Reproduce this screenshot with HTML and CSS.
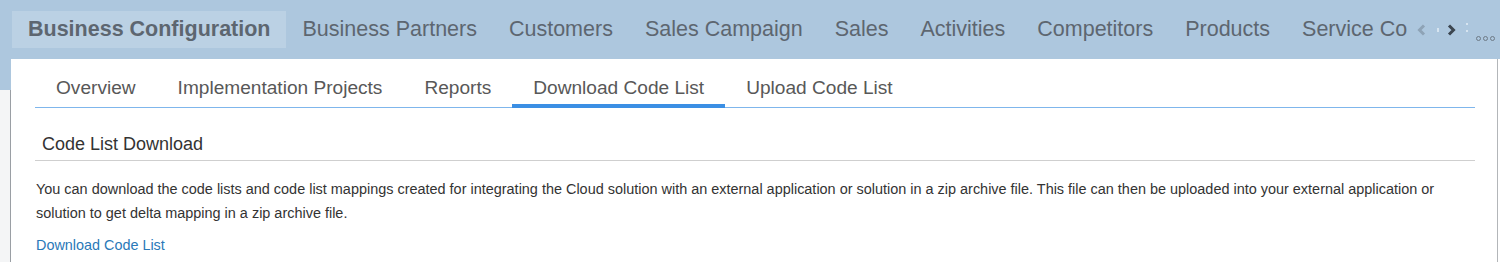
FILE: index.html
```html
<!DOCTYPE html>
<html lang="en">
<head>
    <meta charset="UTF-8">
    <title>Business Configuration</title>
    <link rel="stylesheet" href="styles.css">
</head>
<body>
    <!-- Top work center bar -->
    <div class="topbar">
        <nav class="workcenters">
            <a class="wc active">Business Configuration</a>
            <a class="wc">Business Partners</a>
            <a class="wc">Customers</a>
            <a class="wc">Sales Campaign</a>
            <a class="wc">Sales</a>
            <a class="wc">Activities</a>
            <a class="wc">Competitors</a>
            <a class="wc">Products</a>
            <a class="wc cut">Service Co</a>
        </nav>
        <div class="scrollers">
            <svg class="arrow off" width="9" height="12" viewBox="0 0 9 12"><path d="M7 1.5 L2.5 6 L7 10.5" fill="none" stroke="currentColor" stroke-width="3"/></svg>
            <span class="dot-sep single"></span>
            <svg class="arrow" width="9" height="12" viewBox="0 0 9 12"><path d="M2 1.5 L6.5 6 L2 10.5" fill="none" stroke="currentColor" stroke-width="3"/></svg>
            <span class="dot-sep"></span>
            <span class="overflow"><i></i><i></i><i></i></span>
        </div>
    </div>

    <div class="page">
        <div class="side-left"></div>
        <main class="panel">
            <ul class="tabs">
                <li class="tab">Overview</li>
                <li class="tab">Implementation Projects</li>
                <li class="tab">Reports</li>
                <li class="tab selected">Download Code List</li>
                <li class="tab">Upload Code List</li>
            </ul>

            <h2 class="section-title">Code List Download</h2>
            <p class="section-text">You can download the code lists and code list mappings created for integrating the Cloud solution with an external application or solution in a zip archive file. This file can then be uploaded into your external application or solution to get delta mapping in a zip archive file.</p>
            <a class="download-link" href="#">Download Code List</a>
        </main>
        <div class="side-right"></div>
    </div>
</body>
</html>
```

FILE: styles.css
```css
body {
    margin: 0;
    font-family: 'Liberation Sans', Arial, sans-serif;
    background-color: #adc7de;
    overflow: hidden;
}
/* Work center bar */
.topbar {
    display: flex;
    align-items: center;
    height: 59px;
    padding-left: 12px;
}
.workcenters {
    display: flex;
    width: 1397px;
    overflow: hidden;
    white-space: nowrap;
}
.wc {
    flex: none;
    height: 37px;
    line-height: 37px;
    padding: 0 16px;
    font-size: 21.5px;
    color: #5d6670;
}
.wc.active {
    font-weight: bold;
    background-color: #bbd1e4;
}
.wc.cut {
    padding-right: 0;
}
.scrollers {
    display: flex;
    align-items: center;
    margin-left: 8px;
    height: 37px;
}
.arrow {
    color: #3c4650;
    margin-top: 1px;
}
.arrow.off {
    color: #8ea3b6;
}
.dot-sep {
    width: 2px;
    height: 4px;
    margin: 0 10px;
    background-color: #d6e4f0;
}
.dot-sep.single {
    margin: 0 8px 0 11px;
}
.dot-sep:not(.single) {
    height: 9px;
    background: none;
    border-top: 2px solid #d6e4f0;
    border-bottom: 2px solid #d6e4f0;
    box-sizing: border-box;
    margin: -4px 8px 0 10px;
}
.overflow {
    display: flex;
    gap: 2px;
    margin-top: 18px;
}
.overflow i {
    width: 3px;
    height: 3px;
    border: 1px solid #6d7a86;
    border-radius: 50%;
}
/* Page body */
.page {
    display: flex;
    height: 203px;
}
.side-left {
    width: 10px;
    margin-top: 31px;
    background-color: #f4f5f6;
    border-right: 1px solid #9a9fa4;
}
.side-right {
    width: 2px;
    background-color: #fff;
    border-left: 1px solid #b3b6b9;
}
.panel {
    flex: 1;
    background-color: #fff;
    padding: 0 22px 0 24px;
    color: #333;
}
.tabs {
    display: flex;
    list-style: none;
    margin: 0;
    padding: 0;
    height: 48px;
    border-bottom: 1px solid #7fb6ec;
}
.tab {
    padding: 0 21px;
    font-size: 19.1px;
    line-height: 58px;
    color: #585858;
}
.tab.selected {
    height: 45px;
    border-bottom: 4px solid #3b8fe4;
    overflow: hidden;
}
.section-title {
    margin: 25px 0 0;
    padding: 0 0 5px 7px;
    font-size: 18px;
    font-weight: normal;
    line-height: 22px;
    color: #333;
    border-bottom: 1px solid #cfcfcf;
}
.section-text {
    margin: 16px 0 0 1px;
    font-size: 14.45px;
    line-height: 24px;
    color: #333;
}
.download-link {
    display: inline-block;
    margin: 8px 0 0 1px;
    font-size: 14.4px;
    line-height: 24px;
    color: #2a79b8;
    text-decoration: none;
}
```
